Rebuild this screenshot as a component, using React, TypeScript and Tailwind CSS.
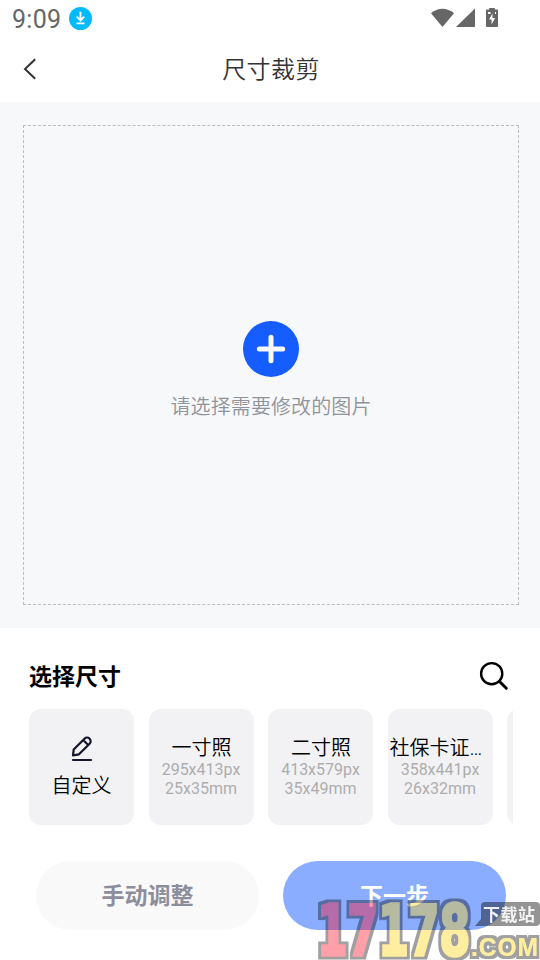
import { useState } from 'react';

interface PhotoSize {
  name: string;
  px: string;
  mm: string;
}

const SIZES: PhotoSize[] = [
  { name: '一寸照', px: '295x413px', mm: '25x35mm' },
  { name: '二寸照', px: '413x579px', mm: '35x49mm' },
  { name: '社保卡证件照', px: '358x441px', mm: '26x32mm' },
];

function StatusBar() {
  return (
    <div className="flex h-9 shrink-0 items-center pl-3 pr-[41px]">
      <span className="pt-[3px] text-[25px] leading-none tracking-[0.3px] text-[#666666]">9:09</span>
      <svg className="ml-2 mt-px h-[23px] w-[23px]" viewBox="0 0 23 23" fill="none">
        <circle cx="11.5" cy="11.5" r="11.5" fill="#02bbff" />
        <path d="M11.5 4.800v8.600M7.700 9.700l3.800 3.800 3.800-3.800M7.500 16.400h8" stroke="#fff" strokeWidth="1.9" />
      </svg>
      <svg className="ml-auto h-5 w-[68px]" viewBox="0 0 68 20" fill="#666666">
        <path d="M0 5.2C6.7-.9 16.3-.9 23 5.2L11.5 19z" />
        <path d="M44 .5V19H25z" />
        <path d="M58.2 1.5V0h5.6v1.5H66a1 1 0 0 1 1 1V18a1 1 0 0 1-1 1H56a1 1 0 0 1-1-1V2.500a1 1 0 0 1 1-1z" />
        <path d="M61.5 5.500L58 11.500h2.600v5l3.500-6.500h-2.600z" fill="#fff" />
        <path d="M57 4h2.500v2H57zM64 4h1v2h-1z" fill="#fff" />
      </svg>
    </div>
  );
}

function SizeCard({ size, active, onClick }: { size: PhotoSize; active: boolean; onClick: () => void }) {
  return (
    <button
      onClick={onClick}
      aria-pressed={active}
      className="flex h-[116px] w-[105px] shrink-0 flex-col items-center rounded-xl bg-[#f2f2f5] pt-[23px]"
    >
      <span className="w-[103px] truncate pl-px pt-0.5 text-center text-[20px] font-[350] leading-[28px] text-black">{size.name}</span>
      <span className="-mt-0.5 text-[16px] leading-[19px] text-[#adadad]">{size.px}</span>
      <span className="text-[16px] leading-[19px] text-[#adadad]">{size.mm}</span>
    </button>
  );
}

// 右下角站点标识
function SiteMark() {
  return (
    <svg
      className="pointer-events-none absolute bottom-0 right-0 h-[64px] w-[228px]"
      viewBox="312 896 228 64"
      aria-hidden="true"
    >
      <defs>
        <filter id="outline" filterUnits="userSpaceOnUse" x="312" y="896" width="228" height="64">
          <feMorphology in="SourceAlpha" operator="dilate" radius="2.500" result="edge" />
          <feMerge>
            <feMergeNode in="edge" />
            <feMergeNode in="SourceGraphic" />
          </feMerge>
        </filter>
      </defs>
      <g opacity="0.37" filter="url(#outline)" fontWeight="700" fill="#ffd200" stroke="#ffd200">
        <text
          x="317"
          y="955"
          fontFamily="'DejaVu Sans', sans-serif"
          fontSize="69"
          strokeWidth="3"
          textLength="153"
          lengthAdjust="spacingAndGlyphs"
        >
          <tspan fill="#ff0014" stroke="#ff0014">17</tspan>
          <tspan>178</tspan>
        </text>
        <text
          x="471"
          y="956"
          fontFamily="'Liberation Sans', sans-serif"
          fontSize="25"
          strokeWidth="0"
          textLength="68"
          letterSpacing="1"
          lengthAdjust="spacingAndGlyphs"
        >
          .COM
        </text>
      </g>
      <path d="M485 902h51q4 0 4 4v16q0 4-4 4h-61l6-7v-13q0-4 4-4z" fill="#000" opacity="0.42" />
      <text
        x="483"
        y="920.5"
        textLength="52"
        fontFamily="'Noto Sans CJK SC', sans-serif"
        fontWeight="700"
        fontSize="17"
        fill="#fff"
        opacity="0.9"
      >
        下载站
      </text>
    </svg>
  );
}

export default function App() {
  const [selected, setSelected] = useState<string | null>(null);

  return (
    <div className="relative flex h-[960px] w-[540px] flex-col overflow-hidden bg-white font-[Roboto,'Noto_Sans_CJK_SC',sans-serif]">
      <StatusBar />

      <header className="flex h-[66px] shrink-0 items-center px-[22px]">
        <button className="w-6" aria-label="返回">
          <svg className="h-6 w-4" viewBox="0 0 16 24" fill="none">
            <path d="M13.200 2.200L3 12l10.200 9.800" stroke="#333" strokeWidth="2" />
          </svg>
        </button>
        <h1 className="flex-1 pr-[22px] pt-0.5 text-center text-[24px] font-[350] leading-[34px] tracking-[0.4px] text-[#333333]">
          尺寸裁剪
        </h1>
      </header>

      <main className="h-[526px] shrink-0 bg-[#f7f8fa] pb-[23px] pl-[23px] pr-[21px] pt-[23px]">
        <button className="flex h-full w-full flex-col items-center border border-dashed border-[#bdbdc0] pt-[195px]">
          <svg className="h-14 w-14" viewBox="0 0 56 56" fill="none">
            <circle cx="28" cy="28" r="28" fill="#165dff" />
            <path d="M28 16.300v23.400M16.300 28h23.400" stroke="#f7f8fa" strokeWidth="5" strokeLinecap="round" />
          </svg>
          <span className="mt-4 text-[20px] font-[350] leading-[28px] tracking-[0.1px] text-[#909399]">请选择需要修改的图片</span>
        </button>
      </main>

      <section className="shrink-0 pl-[29px] pr-[27px] pt-[30px]">
        <div className="flex h-9 items-center justify-between">
          <h2 className="pt-1 text-[23px] font-bold leading-[34px] text-black">选择尺寸</h2>
          <button className="mr-1" aria-label="搜索">
            <svg className="h-[30px] w-[30px]" viewBox="0 0 30 30" fill="none" stroke="#000" strokeLinecap="round">
              <circle cx="12.700" cy="12.700" r="10.600" strokeWidth="2.400" />
              <path d="M20.500 20.500l6.800 6.700" strokeWidth="3" />
            </svg>
          </button>
        </div>

        <div className="mt-[15px] flex gap-[14.500px] overflow-hidden">
          <button className="flex h-[116px] w-[105px] shrink-0 flex-col items-center rounded-xl bg-[#f2f2f5] pt-[27px]">
            <svg className="h-[26px] w-[22px]" viewBox="0 0 22 26" fill="none" stroke="#15152d" strokeWidth="2.200">
              <path d="M2 19.300l.7-5.800L13.500 2.700a3.600 3.600 0 0 1 5.100 5.100L8 18.300zM12.200 4l5 5" strokeLinejoin="round" />
              <path d="M2 24h18" strokeLinecap="round" />
            </svg>
            <span className="mt-[10px] text-[20px] font-[350] leading-[28px] text-black">自定义</span>
          </button>
          {SIZES.map(size => (
            <SizeCard
              key={size.name}
              size={size}
              active={selected === size.name}
              onClick={() => setSelected(size.name)}
            />
          ))}
          <div className="h-[116px] w-[105px] shrink-0 rounded-xl bg-[#f2f2f5]" />
        </div>
      </section>

      <footer className="mt-9 flex gap-6 pl-9">
        <button className="h-[69px] w-[223px] rounded-full bg-[#f9f9f9] pt-1 text-[23px] font-bold text-[#8d8e9b]">
          手动调整
        </button>
        <button className="h-[69px] w-[223px] rounded-full bg-[#8badff] pt-1 text-[23px] font-bold text-white">
          下一步
        </button>
      </footer>

      <SiteMark />
    </div>
  );
}
